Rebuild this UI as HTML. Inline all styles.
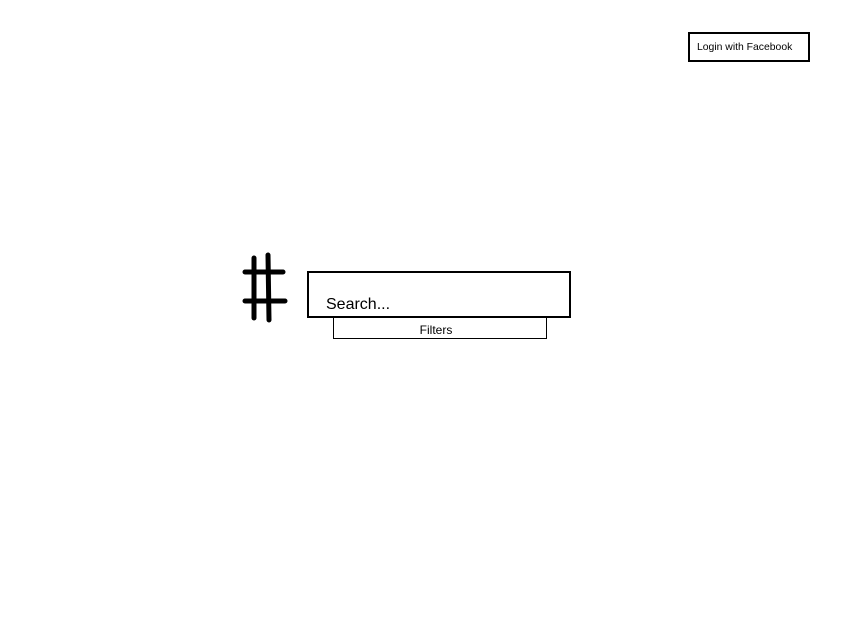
<!DOCTYPE html>
<html><head><meta charset="utf-8"><style>
html,body{margin:0;padding:0;background:#fff;width:850px;height:620px;overflow:hidden;font-family:"Liberation Sans",Arial,sans-serif;color:#000}
.b{position:absolute;box-sizing:border-box}
</style></head><body>
<div class="b" style="left:688px;top:32px;width:122px;height:30px;border:2px solid #000;font-size:10.4px;line-height:27px;padding-left:7px">Login with Facebook</div>
<svg class="b" style="left:0;top:0" width="850" height="620">
<g stroke="#000" stroke-width="5" stroke-linecap="round" fill="none">
<line x1="254" y1="258" x2="254" y2="318"/>
<line x1="268" y1="255" x2="269" y2="320"/>
<line x1="245" y1="272" x2="283" y2="272"/>
<line x1="245" y1="301" x2="285" y2="301"/>
</g></svg>
<div class="b" style="left:307px;top:271px;width:264px;height:47px;border:2px solid #000;font-size:16px;padding:23px 0 0 17px">Search...</div>
<div class="b" style="left:333px;top:317px;width:214px;height:22px;border:1px solid #000;font-size:12px;text-align:center;line-height:24px;padding-right:8px">Filters</div>
</body></html>
